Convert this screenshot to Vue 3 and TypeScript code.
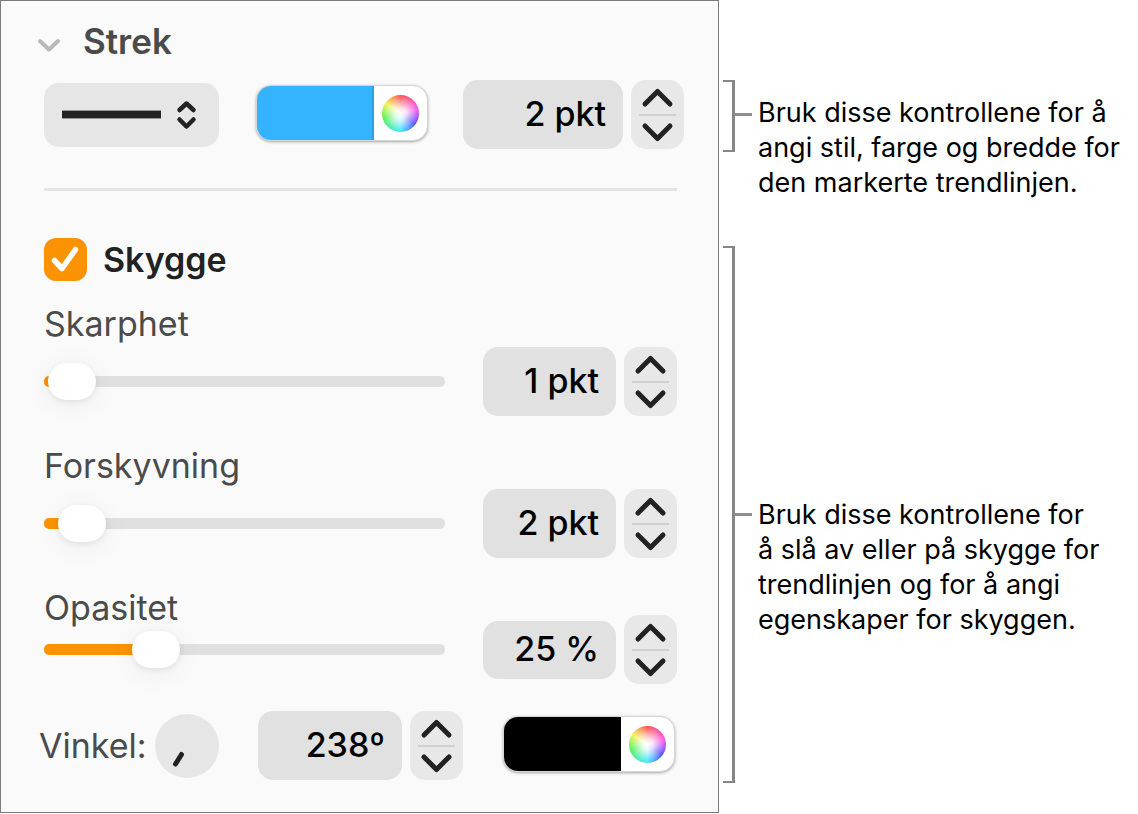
<script setup lang="ts">
import { computed, reactive, ref } from 'vue'

interface SliderSetting {
  id: string
  label: string
  value: number
  max: number
  unit: string
  compact: boolean
}

const lineStyle = ref('solid')
const strokeWidth = ref(2)
const shadowOn = ref(true)
const angle = ref(238)

const settings = reactive<SliderSetting[]>([
  { id: 'blur', label: 'Skarphet', value: 1, max: 100, unit: 'pkt', compact: false },
  { id: 'offset', label: 'Forskyvning', value: 2, max: 50, unit: 'pkt', compact: false },
  { id: 'opacity', label: 'Opasitet', value: 25, max: 100, unit: '%', compact: true },
])

const dialTransform = computed(() => `rotate(${238 - angle.value} 32 32)`)

function step(setting: SliderSetting, delta: number) {
  setting.value = Math.min(setting.max, Math.max(0, setting.value + delta))
}
</script>

<template>
  <main class="page">
    <section class="panel">
      <header class="heading">
        <button class="disclosure" type="button" aria-label="Strek" aria-expanded="true">
          <svg viewBox="0 0 24 16" width="24" height="16"><path d="M3 4 L12 12.500 L21 4" /></svg>
        </button>
        <h2>Strek</h2>
      </header>

      <div class="row stroke-row">
        <div class="popup">
          <select v-model="lineStyle" aria-label="Strekstil">
            <option value="solid" aria-label="Heltrukken"></option>
          </select>
          <svg class="popup-art" viewBox="0 0 175 64" width="175" height="64" aria-hidden="true">
            <rect x="18" y="27" width="99" height="9" fill="#222" fill-opacity="0.4" />
            <rect x="18" y="28" width="99" height="7" fill="#222" />
            <path d="M135.500 27 L142.500 20.500 L149.500 27 M135.500 36.500 L142.500 43.500 L149.500 36.500" />
          </svg>
        </div>
        <div class="well">
          <button class="swatch blue" type="button" aria-label="Strekfarge"></button>
          <button class="picker" type="button" aria-label="Fargehjul"><span class="wheel"></span></button>
        </div>
        <div class="amount grow">
          <input class="field" type="text" aria-label="Bredde" :value="`${strokeWidth} pkt`" />
          <div class="stepper">
            <button type="button" aria-label="Øk bredde" @click="strokeWidth++">
              <svg viewBox="0 0 53 34"><path d="M14 24 L26.500 11.500 L39 24" /></svg>
            </button>
            <button type="button" aria-label="Reduser bredde" @click="strokeWidth--">
              <svg viewBox="0 0 53 34"><path d="M14 12 L26.500 24.500 L39 12" /></svg>
            </button>
          </div>
        </div>
      </div>

      <hr />

      <div class="check-row">
        <span class="check">
          <input id="shadow" v-model="shadowOn" type="checkbox" />
          <svg v-if="shadowOn" viewBox="0 0 43 43" width="43" height="43" aria-hidden="true">
            <path d="M10.500 22.500 L18 30.500 L31.500 11.500" />
          </svg>
        </span>
        <label for="shadow">Skygge</label>
      </div>

      <div v-for="s in settings" :key="s.id" class="setting" :class="{ compact: s.compact }">
        <div class="slider">
          <label :for="s.id">{{ s.label }}</label>
          <input
            :id="s.id"
            v-model.number="s.value"
            type="range"
            min="0"
            :max="s.max"
            :style="{ '--level': s.value / s.max }"
          />
        </div>
        <div class="amount">
          <input class="field" type="text" :aria-label="s.label" :value="`${s.value} ${s.unit}`" />
          <div class="stepper">
            <button type="button" :aria-label="`Øk ${s.label}`" @click="step(s, 1)">
              <svg viewBox="0 0 53 34"><path d="M14 24 L26.500 11.500 L39 24" /></svg>
            </button>
            <button type="button" :aria-label="`Reduser ${s.label}`" @click="step(s, -1)">
              <svg viewBox="0 0 53 34"><path d="M14 12 L26.500 24.500 L39 12" /></svg>
            </button>
          </div>
        </div>
      </div>

      <div class="row angle-row">
        <label for="angle">Vinkel:</label>
        <button class="dial" type="button" aria-label="Vinkelhjul">
          <svg viewBox="0 0 64 64" width="64" height="64">
            <path d="M20.500 50 L26.500 40.500" :transform="dialTransform" />
          </svg>
        </button>
        <div class="amount">
          <input id="angle" class="field" type="text" :value="`${angle}º`" />
          <div class="stepper">
            <button type="button" aria-label="Øk vinkel" @click="angle++">
              <svg viewBox="0 0 53 34"><path d="M14 24 L26.500 11.500 L39 24" /></svg>
            </button>
            <button type="button" aria-label="Reduser vinkel" @click="angle--">
              <svg viewBox="0 0 53 34"><path d="M14 12 L26.500 24.500 L39 12" /></svg>
            </button>
          </div>
        </div>
        <div class="well">
          <button class="swatch black" type="button" aria-label="Skyggefarge"></button>
          <button class="picker" type="button" aria-label="Fargehjul"><span class="wheel"></span></button>
        </div>
      </div>
    </section>

    <aside class="callouts">
      <div class="callout">
        <span class="bracket short"></span>
        <span class="tick short"></span>
        <p class="near">
          Bruk disse kontrollene for å<br />angi stil, farge og bredde for<br />den markerte trendlinjen.
        </p>
      </div>
      <div class="callout tall">
        <span class="bracket"></span>
        <span class="tick"></span>
        <p class="far">
          Bruk disse kontrollene for<br />å slå av eller på skygge for<br />trendlinjen og for å angi<br />egenskaper for skyggen.
        </p>
      </div>
    </aside>
  </main>
</template>

<style>
body {
  margin: 0;
  background: #fff;
}
</style>

<style scoped>
.page {
  display: grid;
  grid-template-columns: 719fr 419fr;
  font-family: Inter, "Liberation Sans", sans-serif;
  color: #000;
}
.page * {
  box-sizing: border-box;
}
button,
input,
select {
  margin: 0;
  padding: 0;
  border: 0;
  font: inherit;
  color: inherit;
  background: none;
  appearance: none;
}
svg {
  display: block;
  fill: none;
  stroke: #222;
  stroke-width: 5;
  stroke-linecap: round;
  stroke-linejoin: round;
}
.panel {
  min-width: 0;
  padding: 17px 41px 32px 43px;
  border: 1px solid #7d7b7f;
  background: #fafafa;
  font-size: 34px;
  line-height: 42px;
  color: #4b4b4b;
}
.heading {
  display: flex;
  align-items: center;
  gap: 22px;
  height: 46px;
  margin: 0 0 16px -7px;
}
.heading h2 {
  margin: 0;
  font-size: 35px;
  font-weight: 600;
}
.disclosure {
  padding-top: 8px;
}
.disclosure svg {
  stroke: #b9b9b9;
  stroke-width: 4;
}
.row,
.check-row,
.amount {
  display: flex;
  align-items: center;
}
.stroke-row {
  margin-right: -7px;
}
.popup {
  position: relative;
  width: 175px;
  height: 64px;
  margin-right: 37px;
}
.popup select {
  display: block;
  width: 100%;
  height: 100%;
  border-radius: 15px;
  background: #e6e6e6;
}
.popup-art {
  position: absolute;
  inset: 0;
  pointer-events: none;
  stroke-width: 4.500;
}
.popup-art rect {
  stroke: none;
}
.well {
  display: flex;
  width: 172px;
  height: 56px;
  margin-bottom: 3px;
  border: 1px solid #d6d6d6;
  border-radius: 15px;
  background: #fff;
  box-shadow: 0 1px 3px rgba(0, 0, 0, 0.35);
  overflow: hidden;
}
.swatch {
  flex: 1;
}
.swatch.blue {
  background: #34b3ff;
  border-right: 2px solid #2d9fe5;
}
.swatch.black {
  background: #000;
}
.picker {
  display: grid;
  place-items: center;
  width: 53px;
}
.wheel {
  width: 37px;
  height: 37px;
  border-radius: 50%;
  background:
    radial-gradient(circle closest-side, #fff 0%, rgba(255, 255, 255, 0.85) 30%, rgba(255, 255, 255, 0.1) 100%),
    conic-gradient(#ff3535, #f53be8 75deg, #3a35ff 125deg, #25e5ff 180deg, #3aef3a 255deg, #f2f038 305deg, #ff3535);
}
.amount {
  gap: 8px;
}
.amount.grow {
  flex: 1;
  margin-left: 35px;
}
.field {
  flex: 1;
  min-width: 0;
  width: 133px;
  height: 69px;
  padding: 0 17px 3px 8px;
  border-radius: 15px;
  background: #e1e1e1;
  color: #000;
  font-weight: 500;
  text-align: right;
}
.stepper {
  flex: none;
  width: 53px;
  height: 69px;
  border-radius: 15px;
  background: #e8e8e8;
}
.stepper button {
  display: block;
  width: 53px;
  height: 34px;
}
.stepper button + button::before {
  content: "";
  display: block;
  height: 2px;
  margin: 0 8px -2px;
  background: #d0d0d0;
}
hr {
  height: 3px;
  margin: 39px 0 47px;
  border: 0;
  background: #e4e4e4;
}
.check-row {
  gap: 16px;
  margin-bottom: 22px;
  font-weight: 600;
  color: #222;
}
.check {
  position: relative;
  width: 43px;
  height: 43px;
}
.check input {
  display: block;
  width: 43px;
  height: 43px;
  border-radius: 12px;
  background: #e1e1e1;
}
.check input:checked {
  background: #fb9300;
}
.check svg {
  position: absolute;
  inset: 0;
  stroke: #fff;
  stroke-width: 5.500;
  pointer-events: none;
}
.setting {
  display: grid;
  grid-template-columns: 1fr 194px;
  column-gap: 38px;
  align-items: end;
  margin-bottom: 29px;
}
.slider {
  display: flex;
  flex-direction: column;
  gap: 16px;
  padding-bottom: 15px;
}
.slider input {
  width: 100%;
  height: 40px;
}
.slider input::-webkit-slider-runnable-track {
  height: 11px;
  border-radius: 5px;
  background: linear-gradient(#fb9300, #fb9300) no-repeat #e0e0e0;
  background-size: calc(24px + (100% - 48px) * var(--level)) 100%;
}
.slider input::-webkit-slider-thumb {
  appearance: none;
  width: 48px;
  height: 37px;
  margin-top: -13px;
  border-radius: 19px;
  background: #fff;
  box-shadow: 0 2px 6px rgba(0, 0, 0, 0.08), 0 4px 28px rgba(0, 0, 0, 0.06);
}
.setting.compact {
  margin-bottom: 27px;
}
.compact .slider {
  gap: 0;
}
.compact .field {
  height: 58px;
}
.angle-row {
  margin: 0 2px 0 -5px;
}
.angle-row label {
  flex: 1;
}
.dial {
  width: 64px;
  height: 64px;
  margin-right: 39px;
  border-radius: 50%;
  background: #e6e6e6;
}
.angle-row .field {
  width: 144px;
}
.angle-row .well {
  margin-left: 40px;
}
.callouts {
  display: flex;
  flex-direction: column;
  gap: 46px;
  padding: 80px 0 30px 4px;
}
.callout {
  display: flex;
  align-items: flex-start;
  font-size: 27px;
  line-height: 35px;
}
.tall {
  flex: 1;
}
.callout p {
  margin: 0 0 0 6px;
  white-space: nowrap;
}
.callout .near {
  padding-top: 15px;
}
.callout .far {
  align-self: center;
  padding-top: 104px;
}
.bracket {
  width: 12px;
  align-self: stretch;
  border: 2px solid #868686;
  border-right-width: 3px;
  border-left: 0;
}
.bracket.short {
  height: 72px;
  align-self: flex-start;
}
.tick {
  align-self: center;
  width: 17px;
  height: 3px;
  background: #8e8e8e;
}
.tick.short {
  align-self: flex-start;
  margin-top: 33px;
}
</style>
